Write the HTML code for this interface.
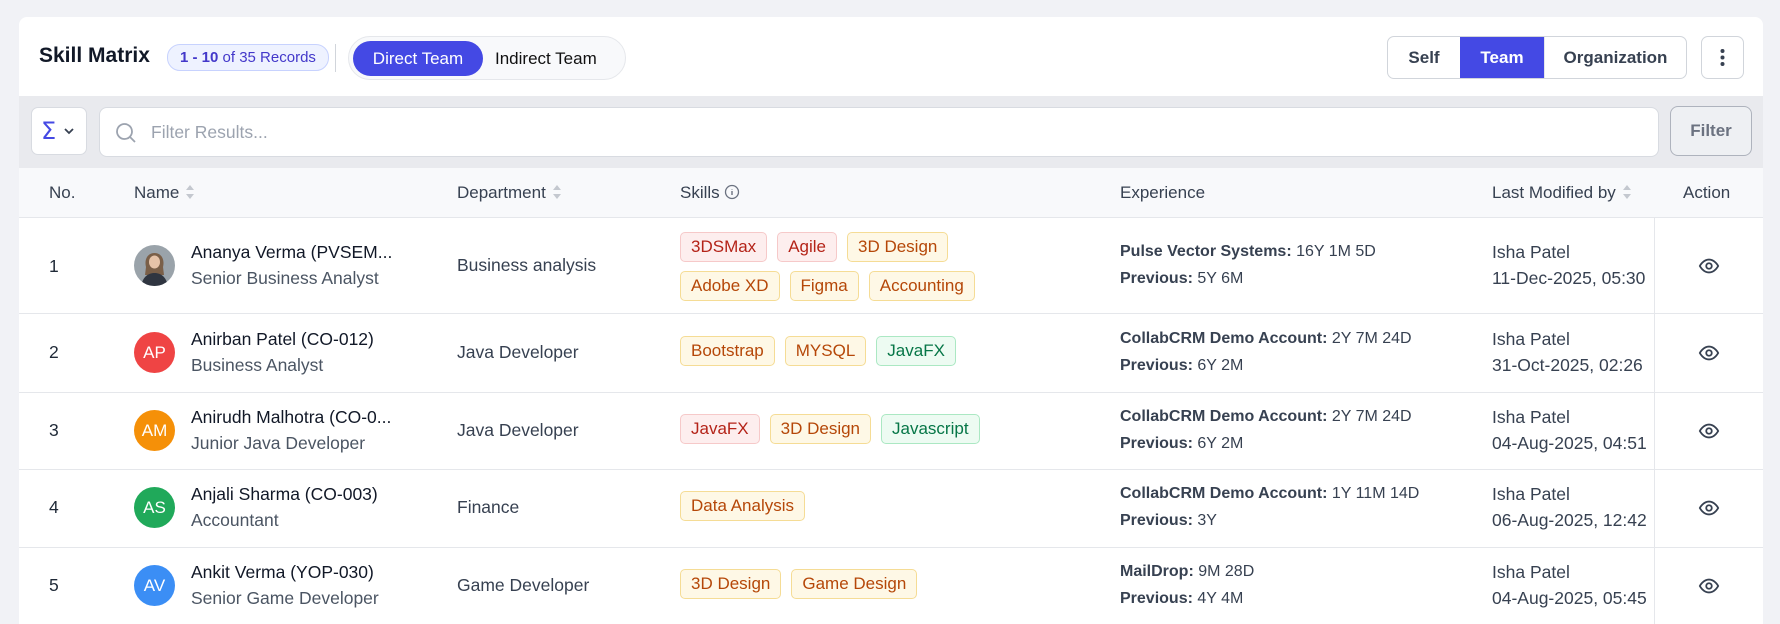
<!DOCTYPE html>
<html style="overflow:hidden"><head><meta charset="utf-8"><style>
*{box-sizing:border-box;margin:0;padding:0}
html,body{width:1780px;height:624px;overflow:hidden}
body{background:#f1f2f6;font-family:"Liberation Sans",sans-serif;color:#1f2937;position:relative}
.card{position:absolute;left:19px;top:17px;width:1744px;height:607px;background:#fff;border-radius:8px 8px 0 0;overflow:hidden}
.abs{position:absolute}
.title{left:20px;top:27px;font-size:21px;font-weight:bold;color:#111827}
.badge{left:148px;top:27px;height:27px;padding:0 12px;border:1px solid #c7d2fe;background:#eef2ff;border-radius:13px;font-size:15px;line-height:25px;color:#4338ca}
.sep{left:316px;top:27px;width:1px;height:28px;background:#d1d5db}
.seg{left:329px;top:19px;height:44px;width:278px;border:1px solid #e5e7eb;background:#f8f9fb;border-radius:22px}
.seg .on{position:absolute;left:4px;top:4px;height:35px;width:130px;background:#4449e4;color:#fff;border-radius:18px;font-size:17px;line-height:35px;text-align:center}
.seg .off{position:absolute;left:146px;top:4px;line-height:35px;font-size:17px;color:#111}
.vs{left:1368px;top:19px;height:43px;width:300px;border:1px solid #d1d5db;border-radius:7px;overflow:hidden;display:flex;font-size:17px;font-weight:bold;color:#374151}
.vs div{line-height:41px;text-align:center}
.more{left:1682px;top:19px;width:43px;height:43px;border:1px solid #d1d5db;border-radius:7px}
.tb{left:0;top:79px;width:1744px;height:72px;background:#e9eaee}
.sig{left:12px;top:11px;width:56px;height:48px;background:#fff;border:1px solid #d8dbe1;border-radius:7px}
.inp{left:80px;top:11px;width:1560px;height:50px;background:#fff;border:1px solid #d8dbe1;border-radius:8px}
.flt{left:1651px;top:10px;width:82px;height:50px;border:1px solid #aeb3bd;border-radius:8px;background:#eef0f3;font-size:17px;font-weight:bold;color:#6b7280;text-align:center;line-height:48px}
.th{left:0;top:151px;width:1744px;height:50px;background:#f8f9fb;border-bottom:1px solid #e5e7eb;font-size:17px;color:#374151}
.th>span{position:absolute;top:15px;white-space:nowrap}
.th svg.s{vertical-align:-2px;margin-left:6px}
.row{position:absolute;left:0;width:1744px;border-bottom:1px solid #e5e7eb;font-size:17.5px;white-space:nowrap}
.row .n{position:absolute;left:30px}
.av{position:absolute;left:115px;width:41px;height:41px;border-radius:50%;color:#fff;font-size:17px;text-align:center;line-height:41px;overflow:hidden}
.nm{position:absolute;left:172px;color:#111827}
.rl{position:absolute;left:172px;color:#4b5563}
.dp{position:absolute;left:438px;color:#374151}
.tags{position:absolute;left:661px;width:330px;display:flex;flex-wrap:wrap;gap:9px 10px}
.t{height:30px;padding:0 10px;border:1px solid;border-radius:5px;font-size:17px;line-height:28px}
.r{background:#fdeeee;border-color:#f6c9c9;color:#b42318}
.o{background:#fef8e6;border-color:#f5dc95;color:#b54708}
.g{background:#edfbf2;border-color:#abe8c3;color:#067647}
.ex{position:absolute;left:1101px;color:#374151;font-size:16px}
.lm{position:absolute;left:1473px;color:#374151}
.act{position:absolute;left:1635px;top:0;bottom:0;width:109px;border-left:1px solid #e5e7eb}
.act svg{position:absolute;left:43px}
</style></head><body>
<div class="card">
<div class="abs title">Skill Matrix</div>
<div class="abs badge"><b>1 - 10</b> of 35 Records</div>
<div class="abs sep"></div>
<div class="abs seg"><div class="on">Direct Team</div><div class="off">Indirect Team</div></div>
<div class="abs vs"><div style="width:72px">Self</div><div style="width:84px;background:#4449e4;color:#fff">Team</div><div style="flex:1;border-left:1px solid #e5e7eb">Organization</div></div>
<div class="abs more"><svg width="41" height="41" viewBox="0 0 41 41"><circle cx="20.5" cy="14" r="2" fill="#374151"/><circle cx="20.5" cy="20.5" r="2" fill="#374151"/><circle cx="20.5" cy="27" r="2" fill="#374151"/></svg></div>
<div class="abs tb">
<div class="abs sig"><svg width="54" height="46" viewBox="0 0 54 46"><text x="9" y="31" font-size="24" fill="#4449e4" font-family="DejaVu Sans">Σ</text><path d="M33 21l4 4 4-4" stroke="#374151" stroke-width="1.8" fill="none"/></svg></div>
<div class="abs inp"><svg class="abs" style="left:14px;top:13px" width="24" height="24" viewBox="0 0 24 24"><circle cx="10.5" cy="10.5" r="7.5" stroke="#9ca3af" stroke-width="1.8" fill="none"/><path d="M16 16l5 5" stroke="#9ca3af" stroke-width="1.8"/></svg><span class="abs" style="left:51px;top:14px;font-size:17.5px;color:#9ca3af">Filter Results...</span></div>
<div class="abs flt">Filter</div>
</div>
<div class="abs th">
<span style="left:30px">No.</span>
<span style="left:115px">Name<svg class="s" width="10" height="16" viewBox="0 0 10 16"><path d="M1 6l4-5 4 5zM1 10l4 5 4-5z" fill="#c4c8cf"/></svg></span>
<span style="left:438px">Department<svg class="s" width="10" height="16" viewBox="0 0 10 16"><path d="M1 6l4-5 4 5zM1 10l4 5 4-5z" fill="#c4c8cf"/></svg></span>
<span style="left:661px">Skills <svg width="16" height="16" viewBox="0 0 16 16" style="vertical-align:-2px"><circle cx="8" cy="8" r="6.5" stroke="#6b7280" fill="none" stroke-width="1.3"/><path d="M8 7v4M8 5v.5" stroke="#6b7280" stroke-width="1.4"/></svg></span>
<span style="left:1101px">Experience</span>
<span style="left:1473px">Last Modified by<svg class="s" width="10" height="16" viewBox="0 0 10 16"><path d="M1 6l4-5 4 5zM1 10l4 5 4-5z" fill="#c4c8cf"/></svg></span>
<span style="left:1664px">Action</span>
</div>

<div class="row" style="top:201px;height:96px">
<span class="n" style="top:38px">1</span>
<div class="av" style="top:27px;background:#9aa3aa"><svg width="41" height="41"><path d="M12 22c-2-8 2-14 8.5-14S31 14 29 22l1 8H11z" fill="#7a5f48"/><ellipse cx="20.5" cy="17" rx="5.5" ry="6.5" fill="#e6c3a8"/><path d="M7 41c2-10 8-13 13.5-13S32 31 34 41z" fill="#2f3540"/></svg></div>
<span class="nm" style="top:24px">Ananya Verma (PVSEM...</span>
<span class="rl" style="top:50px">Senior Business Analyst</span>
<span class="dp" style="top:37px">Business analysis</span>
<div class="tags" style="top:14px"><span class="t r">3DSMax</span><span class="t r">Agile</span><span class="t o">3D Design</span><span class="t o">Adobe XD</span><span class="t o">Figma</span><span class="t o">Accounting</span></div>
<span class="ex" style="top:25px"><b>Pulse Vector Systems:</b> 16Y 1M 5D</span>
<span class="ex" style="top:52px"><b>Previous:</b> 5Y 6M</span>
<span class="lm" style="top:24px">Isha Patel</span>
<span class="lm" style="top:50px">11-Dec-2025, 05:30</span>
<div class="act"><svg style="top:37px" width="22" height="22" viewBox="0 0 24 24"><path d="M2 12s3.6-7 10-7 10 7 10 7-3.6 7-10 7S2 12 2 12z" stroke="#374151" stroke-width="2" fill="none"/><circle cx="12" cy="12" r="3" stroke="#374151" stroke-width="2" fill="none"/></svg></div>
</div>

<div class="row" style="top:297px;height:79px">
<span class="n" style="top:28px">2</span>
<div class="av" style="top:18px;background:#ef4444">AP</div>
<span class="nm" style="top:15px">Anirban Patel (CO-012)</span>
<span class="rl" style="top:41px">Business Analyst</span>
<span class="dp" style="top:28px">Java Developer</span>
<div class="tags" style="top:22px"><span class="t o">Bootstrap</span><span class="t o">MYSQL</span><span class="t g">JavaFX</span></div>
<span class="ex" style="top:16px"><b>CollabCRM Demo Account:</b> 2Y 7M 24D</span>
<span class="ex" style="top:43px"><b>Previous:</b> 6Y 2M</span>
<span class="lm" style="top:15px">Isha Patel</span>
<span class="lm" style="top:41px">31-Oct-2025, 02:26</span>
<div class="act"><svg style="top:28px" width="22" height="22" viewBox="0 0 24 24"><path d="M2 12s3.6-7 10-7 10 7 10 7-3.6 7-10 7S2 12 2 12z" stroke="#374151" stroke-width="2" fill="none"/><circle cx="12" cy="12" r="3" stroke="#374151" stroke-width="2" fill="none"/></svg></div>
</div>

<div class="row" style="top:376px;height:77px">
<span class="n" style="top:27px">3</span>
<div class="av" style="top:17px;background:#f59008">AM</div>
<span class="nm" style="top:14px">Anirudh Malhotra (CO-0...</span>
<span class="rl" style="top:40px">Junior Java Developer</span>
<span class="dp" style="top:27px">Java Developer</span>
<div class="tags" style="top:21px"><span class="t r">JavaFX</span><span class="t o">3D Design</span><span class="t g">Javascript</span></div>
<span class="ex" style="top:15px"><b>CollabCRM Demo Account:</b> 2Y 7M 24D</span>
<span class="ex" style="top:42px"><b>Previous:</b> 6Y 2M</span>
<span class="lm" style="top:14px">Isha Patel</span>
<span class="lm" style="top:40px">04-Aug-2025, 04:51</span>
<div class="act"><svg style="top:27px" width="22" height="22" viewBox="0 0 24 24"><path d="M2 12s3.6-7 10-7 10 7 10 7-3.6 7-10 7S2 12 2 12z" stroke="#374151" stroke-width="2" fill="none"/><circle cx="12" cy="12" r="3" stroke="#374151" stroke-width="2" fill="none"/></svg></div>
</div>

<div class="row" style="top:453px;height:78px">
<span class="n" style="top:27px">4</span>
<div class="av" style="top:17px;background:#20a95a">AS</div>
<span class="nm" style="top:14px">Anjali Sharma (CO-003)</span>
<span class="rl" style="top:40px">Accountant</span>
<span class="dp" style="top:27px">Finance</span>
<div class="tags" style="top:21px"><span class="t o">Data Analysis</span></div>
<span class="ex" style="top:15px"><b>CollabCRM Demo Account:</b> 1Y 11M 14D</span>
<span class="ex" style="top:42px"><b>Previous:</b> 3Y</span>
<span class="lm" style="top:14px">Isha Patel</span>
<span class="lm" style="top:40px">06-Aug-2025, 12:42</span>
<div class="act"><svg style="top:27px" width="22" height="22" viewBox="0 0 24 24"><path d="M2 12s3.6-7 10-7 10 7 10 7-3.6 7-10 7S2 12 2 12z" stroke="#374151" stroke-width="2" fill="none"/><circle cx="12" cy="12" r="3" stroke="#374151" stroke-width="2" fill="none"/></svg></div>
</div>

<div class="row" style="top:531px;height:90px;border-bottom:none">
<span class="n" style="top:27px">5</span>
<div class="av" style="top:17px;background:#3b8ef5">AV</div>
<span class="nm" style="top:14px">Ankit Verma (YOP-030)</span>
<span class="rl" style="top:40px">Senior Game Developer</span>
<span class="dp" style="top:27px">Game Developer</span>
<div class="tags" style="top:21px"><span class="t o">3D Design</span><span class="t o">Game Design</span></div>
<span class="ex" style="top:15px"><b>MailDrop:</b> 9M 28D</span>
<span class="ex" style="top:42px"><b>Previous:</b> 4Y 4M</span>
<span class="lm" style="top:14px">Isha Patel</span>
<span class="lm" style="top:40px">04-Aug-2025, 05:45</span>
<div class="act"><svg style="top:27px" width="22" height="22" viewBox="0 0 24 24"><path d="M2 12s3.6-7 10-7 10 7 10 7-3.6 7-10 7S2 12 2 12z" stroke="#374151" stroke-width="2" fill="none"/><circle cx="12" cy="12" r="3" stroke="#374151" stroke-width="2" fill="none"/></svg></div>
</div>
</div>
</body></html>
